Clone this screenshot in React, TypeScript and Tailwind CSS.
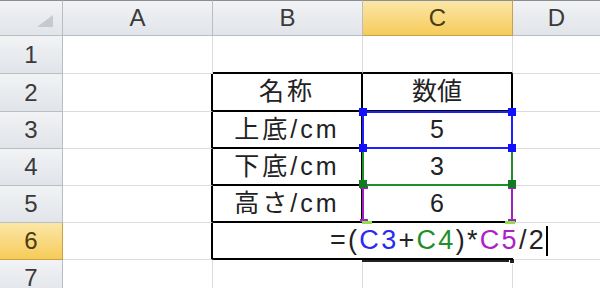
import React from 'react';

const font = { fontFamily: '"Liberation Sans", "Noto Sans CJK JP", sans-serif' };

const rows = [
  { n: 1, h: 'h-[38px]' },
  { n: 2, h: 'h-[38px]' },
  { n: 3, h: 'h-[37px]' },
  { n: 4, h: 'h-[37px]' },
  { n: 5, h: 'h-[37px]' },
  { n: 6, h: 'h-[37px]' },
  { n: 7, h: 'h-[37px]' },
];

const table: Record<number, [string, string]> = {
  2: ['名称', '数値'],
  3: ['上底/cm', '5'],
  4: ['下底/cm', '3'],
  5: ['高さ/cm', '6'],
};

const grayHead = 'bg-gradient-to-b from-[#f1f3f5] to-[#e1e4e9] text-[#3a3a3a]';
const goldHead = 'bg-gradient-to-b from-[#fbe7a6] to-[#f6cb57] text-[#4b3c12]';
const grid = 'border-r border-b border-[#dcdcdc]';

const Square = ({ x, y, c }: { x: number; y: number; c: string }) => (
  <div className={`absolute w-[8px] h-[8px] ${c}`} style={{ left: x - 4, top: y - 4 }} />
);

const App = () => {
  return (
    <div className="relative w-[600px] h-[288px] overflow-hidden bg-white" style={font}>
      <div className="grid grid-cols-[63px_150px_150px_150px_1fr]">
        {/* header row */}
        <div className={`h-[36px] relative border-r border-b border-[#b9bdc4] ${grayHead} border-t border-t-[#8a8e94]`}>
          <svg className="absolute right-[9px] bottom-[8px]" width="16" height="12" viewBox="0 0 16 12">
            <polygon points="16,0 16,12 0,12" fill="#c6c9cd" />
          </svg>
        </div>
        <div className={`h-[36px] flex items-center justify-center text-[24px] border-r border-b border-[#b9bdc4] border-t border-t-[#8a8e94] ${grayHead}`}>A</div>
        <div className={`h-[36px] flex items-center justify-center text-[24px] border-r border-b border-[#b9bdc4] border-t border-t-[#8a8e94] ${grayHead}`}>B</div>
        <div className={`h-[36px] flex items-center justify-center text-[24px] border-r border-b border-[#c9a04c] border-t border-t-[#8a8e94] ${goldHead}`}>C</div>
        <div className={`h-[36px] flex items-center justify-center text-[24px] border-b border-[#b9bdc4] border-t border-t-[#8a8e94] ${grayHead}`}>D</div>

        {rows.map(({ n, h }) => {
          const head = n === 6 ? goldHead : grayHead;
          const headBorder = n === 6 ? 'border-[#c9a04c]' : 'border-[#b9bdc4]';
          const inTable = n >= 2 && n <= 5;
          return (
            <React.Fragment key={n}>
              <div className={`${h} flex items-center justify-center text-[24px] border-r border-b ${headBorder} ${head}`}>{n}</div>
              <div className={`${h} border-b border-[#dcdcdc] ${n >= 2 && n <= 6 ? 'border-r-2 border-r-black' : 'border-r'}`} />
              {n === 1 && (
                <>
                  <div className={`${h} border-r border-[#dcdcdc] border-b-2 border-b-black`} />
                  <div className={`${h} border-r border-[#dcdcdc] border-b-2 border-b-black`} />
                </>
              )}
              {inTable && (
                <>
                  <div className={`${h} flex items-center justify-center text-[25px] tracking-[3px] text-[#222] border-r-2 border-b-2 border-black`}>
                    {table[n][0]}
                  </div>
                  <div className={`${h} flex items-center justify-center text-[25px] text-[#222] border-r-2 border-b-2 border-black`}>
                    {table[n][1]}
                  </div>
                </>
              )}
              {n === 6 && (
                <div className={`${h} col-span-2 flex items-center pl-[117px] text-[27px] tracking-[2.3px] text-[#222] border-b-2 border-black whitespace-nowrap relative z-10`}>
                  <span className="shrink-0">=(</span>
                  <span className="shrink-0 text-[#2b2bf0]">C3</span>
                  <span className="shrink-0">+</span>
                  <span className="shrink-0 text-[#1f8f2a]">C4</span>
                  <span className="shrink-0">)*</span>
                  <span className="shrink-0 text-[#b020c8]">C5</span>
                  <span className="shrink-0">/2</span>
                  <span className="shrink-0 inline-block w-[2px] h-[30px] bg-black" />
                </div>
              )}
              {n === 7 && (
                <>
                  <div className={`${h} ${grid}`} />
                  <div className={`${h} ${grid}`} />
                </>
              )}
              <div className={`${h} border-b border-[#dcdcdc]`} />
            </React.Fragment>
          );
        })}
      </div>

      {/* range reference borders */}
      <div className="absolute left-[362px] top-[111px] w-[151px] h-[38px] border-2 border-[#2020ff]" />
      <div className="absolute left-[362px] top-[148px] w-[151px] h-[38px] border-2 border-t-0 border-[#1f8f2a]" />
      <div className="absolute left-[362px] top-[185px] w-[151px] h-[37px] border-x-2 border-[#a020c0]" />
      <div className="absolute left-[360px] top-[186px] w-[8px] h-[3px] bg-[#a020c0]" />
      <div className="absolute left-[508px] top-[186px] w-[8px] h-[3px] bg-[#a020c0]" />
      <div className="absolute left-[360px] top-[219px] w-[8px] h-[3px] bg-[#a020c0]" />
      <div className="absolute left-[508px] top-[219px] w-[8px] h-[3px] bg-[#a020c0]" />
      <div className="absolute left-[362px] top-[221px] w-[10px] h-[3px] bg-[#8ee04a]" />
      <div className="absolute left-[505px] top-[221px] w-[10px] h-[3px] bg-[#8ee04a]" />

      <Square x={363} y={112} c="bg-[#1010ff]" />
      <Square x={512} y={112} c="bg-[#1010ff]" />
      <Square x={363} y={148} c="bg-[#1010ff]" />
      <Square x={512} y={148} c="bg-[#1010ff]" />
      <Square x={363} y={184} c="bg-[#117a22]" />
      <Square x={512} y={184} c="bg-[#117a22]" />

      {/* edit cell bottom + fill handle */}
      <div className="absolute left-[362px] top-[260px] w-[151px] h-[2px] bg-[#222]" />
      <div className="absolute left-[509px] top-[258px] w-[6px] h-[6px] bg-[#222] border border-white" />
    </div>
  );
};

export default App;
